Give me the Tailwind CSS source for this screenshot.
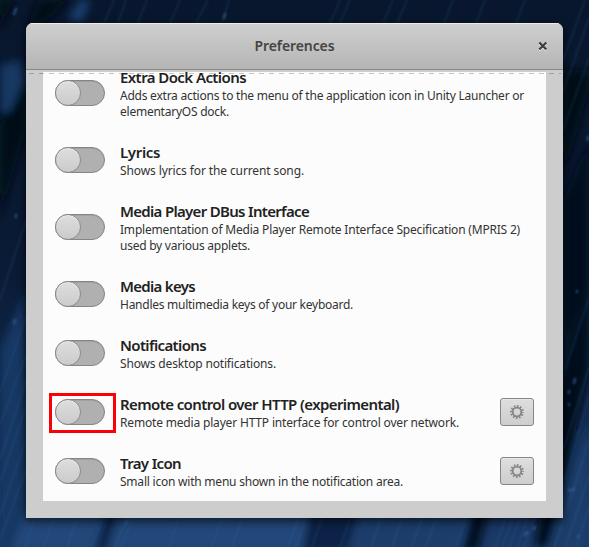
<!DOCTYPE html>
<html lang="en">
<head>
<meta charset="utf-8">
<title>Preferences</title>
<script src="https://cdn.jsdelivr.net/npm/@tailwindcss/browser@4"></script>
</head>
<body class="relative h-[547px] w-[589px] overflow-hidden bg-[#0a1a33] font-['Noto_Sans',sans-serif]">
<svg class="absolute inset-0" width="589" height="547" aria-hidden="true">
  <defs>
    <linearGradient id="bg" x1="0" y1="0" x2="0" y2="1"><stop offset="0" stop-color="#08172d"/><stop offset=".5" stop-color="#0a1b35"/><stop offset="1" stop-color="#1a3a68"/></linearGradient>
    <filter id="b3" x="-50%" y="-50%" width="200%" height="200%"><feGaussianBlur stdDeviation="4"/></filter>
    <filter id="b1"><feGaussianBlur stdDeviation=".8"/></filter>
  </defs>
  <rect width="589" height="547" fill="url(#bg)"/>
  <g filter="url(#b3)">
    <path d="M0 0h14L0 32zM38 0h32L44 24H28zM0 125l18-60 8 10v55L0 220zM563 70h26v20l-26 90z" fill="#020814"/>
    <path d="M563 200l26-60v150l-26 60z" fill="#06101f"/>
    <path d="M563 360l26-70v80l-40 177h-14z" fill="#020b1c"/>
    <path d="M475 508h14l-12 44h-14z" fill="#020b1c"/>
    <path d="M0 65l20-5 6 20-16 32H0z" fill="#163762"/>
    <path d="M68 20L80 0h10L82 22z" fill="#1c4072"/>
    <path d="M0 350l26-60v262H0z" fill="#183764"/>
    <path d="M26 510h325l-12 42H10z" fill="#214679"/>
    <path d="M360 510h110l-12 42H350z" fill="#1c3c6b"/>
    <path d="M546 552l43-130v130z" fill="#1b3d6b"/>
    <path d="M106 510h14l-14 42H94zM310 510h50l-14 42h-44z" fill="#0e2446"/>
  </g>
  <g filter="url(#b1)" stroke="#3b6cae" fill="none">
    <g opacity=".35">
      <path d="M104 23l10-23M118 23l8-23M138 23l9-23M170 23l10-23M196 23l12-23M222 23l7-23M330 23l10-23M340 23l10-23M383 23l10-23M397 23l10-23M444 23l9-23M476 23l9-23M516 23l9-23"/>
      <path d="M563 60l22-60M563 92l26-74M563 130l26-72M565 370l24-72M563 450l26-82M565 480l24-84M570 500l19-60M0 300l26-80M0 392l26-75M0 425l26-70M0 460l26-80M0 482l26-75M0 515l26-75M0 540l26-70"/>
      <path d="M25 547l10-29M44 547l10-29M67 547l10-29M92 547l10-29M114 547l14-29M120 547l14-29M169 547l10-29M212 547l10-29M232 547l10-29M288 547l10-29M296 547l10-29M312 547l10-29M340 547l10-29M371 547l10-29M392 547l10-29M412 547l10-29M426 547l10-29M456 547l10-29M495 547l11-29M502 547l11-29M509 547l11-29M517 547l11-29M524 547l11-29M554 547l18-54M565 547l24-70M576 547l13-40"/>
    </g>
    <g stroke-width="2.5" stroke-linecap="round" opacity=".6"><path d="M14 14l2-5M224 18l1-4M525 535l2-3M534 529l1-2M569 393v-2M569 405v-1M569 491l1-2M573 490l1-1M578 537v-1M126 524l1-2M574 383l1-4M577 292v-1M588 140v-3M14 323l1-3M16 217v-2"/></g>
  </g>
</svg>

<main class="absolute left-[26px] top-[23px] flex h-[495px] w-[537px] flex-col overflow-hidden rounded-t-[7px] bg-[#cdcdcd] shadow-[0_3px_9px_1px_rgba(0,0,0,0.6)]">
  <header class="grid h-[47px] shrink-0 grid-cols-[40px_1fr_40px] items-center border-b border-[#888] bg-linear-to-b from-[#cfcfcf] to-[#b5b5b5] shadow-[inset_0_1px_0_#ededed]">
    <span></span>
    <h1 class="text-center text-[14px] leading-[20px] font-semibold text-[#444]"><span data-w="80" data-font="600 14px 'Noto Sans'">Preferences</span></h1>
    <button class="flex justify-center" aria-label="Close"><svg width="10" height="11" viewBox="0 0 10 11" fill="none" stroke-width="2.2"><path d="M1.3 2.5l7 7m0-7l-7 7" stroke="#eee"/><path d="M1.3 1.5l7 7m0-7l-7 7" stroke="#3c3c3c"/></svg></button>
  </header>
  <section id="list" class="mx-[17px] mt-[2px] flex h-[429px] shrink-0 flex-col justify-end overflow-hidden bg-[#fcfcfc]"></section>
  <svg class="absolute left-[3px] top-[50px]" width="532" height="1" aria-hidden="true"><path d="M0 .5h532" stroke="#000" stroke-opacity=".22" stroke-dasharray="5 5"/></svg>
</main>
<div class="absolute left-[49px] top-[393px] h-[40px] w-[67px] border-3 border-[#fb0007]"></div>

<script>
const rows = [
  ['Extra Dock Actions', 126, [['Adds extra actions to the menu of the application icon in Unity Launcher or', 404], ['elementaryOS dock.', 109]]],
  ['Lyrics', 40, [['Shows lyrics for the current song.', 184]]],
  ['Media Player DBus Interface', 189, [['Implementation of Media Player Remote Interface Specification (MPRIS 2)', 400], ['used by various applets.', 130]]],
  ['Media keys', 75, [['Handles multimedia keys of your keyboard.', 233]]],
  ['Notifications', 86, [['Shows desktop notifications.', 156]]],
  ['Remote control over HTTP (experimental)', 279, [['Remote media player HTTP interface for control over network.', 339]], true],
  ['Tray Icon', 61, [['Small icon with menu shown in the notification area.', 283]], true],
];
const gear = '<svg width="14" height="14" viewBox="0 0 14 14" fill="none" stroke="#858585"><circle cx="7" cy="7" r="4.3" stroke-width="1.8"/><circle cx="7" cy="7" r="5.9" stroke-width="2.1" stroke-dasharray="1.6 1.489" stroke-dashoffset=".8"/></svg>';
document.getElementById('list').innerHTML = rows.map(([title, w, lines, config]) => `
  <div class="flex shrink-0 items-center pl-[12px] pr-[12px] ${lines.length > 1 ? 'h-[75px]' : 'h-[59px]'}">
    <div class="mr-[15px] mb-[2px] h-[26px] w-[50px] shrink-0 rounded-full border border-[#858585] bg-[#b0b0b0] shadow-[inset_0_1px_0_#a2a2a2]">
      <div class="-ml-px -mt-px h-[26px] w-[26px] rounded-full border border-[#8b8b8b] bg-linear-to-b from-[#dedede] to-[#cbcbcb] shadow-[inset_0_1px_0_#eee]"></div>
    </div>
    <div class="min-w-0 flex-1 whitespace-nowrap">
      <h2 class="h-[20px] text-[15px] leading-[18px] font-semibold text-[#222]"><span data-w="${w}" data-font="600 15px 'Noto Sans'">${title}</span></h2>
      ${lines.map(([t, lw]) => `<p class="h-[16px] text-[12px] leading-[16px] text-[#333]"><span data-w="${lw}" data-font="400 12px 'Noto Sans'">${t}</span></p>`).join('')}
    </div>
    ${config ? `<button class="mb-[2px] flex h-[28px] w-[34px] shrink-0 items-center justify-center rounded-[3px] border border-[#858585] bg-linear-to-b from-[#dedede] to-[#cecece] shadow-[inset_0_1px_0_#e8e8e8]" aria-label="Configure">${gear}</button>` : ''}
  </div>`).join('');
/* Track each line of text to its intended measure. */
const ctx = document.createElement('canvas').getContext('2d');
document.querySelectorAll('[data-w]').forEach(el => {
  ctx.font = el.dataset.font;
  el.style.letterSpacing = (Number(el.dataset.w) - ctx.measureText(el.textContent).width) / el.textContent.length + 'px';
});
</script>
</body>
</html>
